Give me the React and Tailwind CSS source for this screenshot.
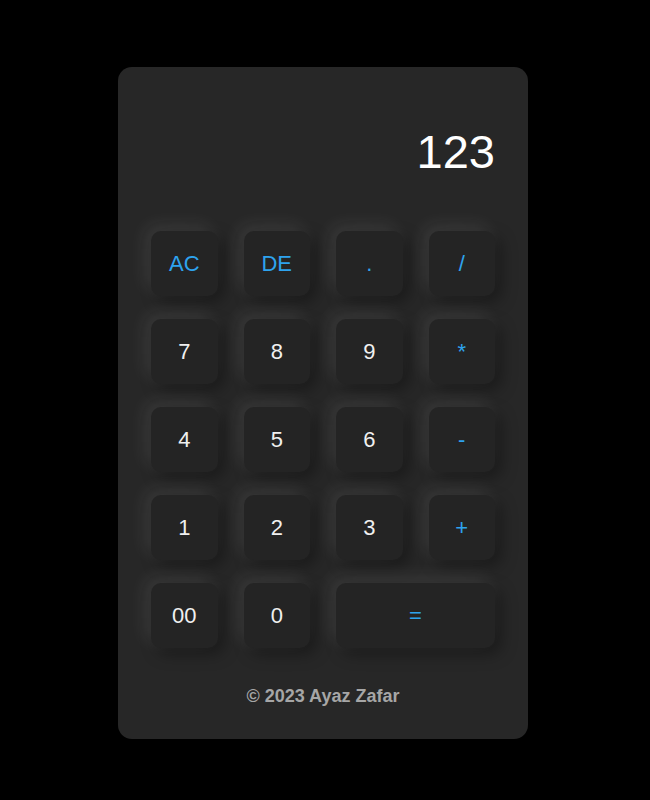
export default function App() {
  const keys = [
    { k: "AC", op: true },
    { k: "DE", op: true },
    { k: ".", op: true },
    { k: "/", op: true },
    { k: "7" },
    { k: "8" },
    { k: "9" },
    { k: "*", op: true },
    { k: "4" },
    { k: "5" },
    { k: "6" },
    { k: "-", op: true },
    { k: "1" },
    { k: "2" },
    { k: "3" },
    { k: "+", op: true },
    { k: "00" },
    { k: "0" },
    { k: "=", op: true, wide: true },
  ];
  return (
    <div
      className="min-h-screen bg-black pt-[67px]"
      style={{ fontFamily: '"Liberation Sans", Arial, sans-serif' }}
    >
      <div className="ml-[118px] w-[410px] rounded-[14px] bg-[#272727] px-[33px] pt-[58px] pb-[32px]">
        <div className="h-[54px] text-right text-[47px] leading-[54px] text-white">
          123
        </div>
        <div className="mt-[52px] grid grid-cols-4 gap-x-[26px] gap-y-[23px]">
          {keys.map((b) => (
            <button
              key={b.k}
              className={
                "h-[65px] rounded-[10px] bg-[#242424] text-[22px] shadow-[-6px_-6px_18px_rgba(255,255,255,0.09),6px_6px_16px_rgba(0,0,0,0.35)] " +
                (b.op ? "text-[#2ea3ee] " : "text-[#f0f0f0] ") +
                (b.wide ? "col-span-2" : "")
              }
            >
              {b.k}
            </button>
          ))}
        </div>
        <div className="mt-[38px] text-center text-[18px] font-bold leading-[21px] text-[#a6a6a6]">
          © 2023 Ayaz Zafar
        </div>
      </div>
    </div>
  );
}
